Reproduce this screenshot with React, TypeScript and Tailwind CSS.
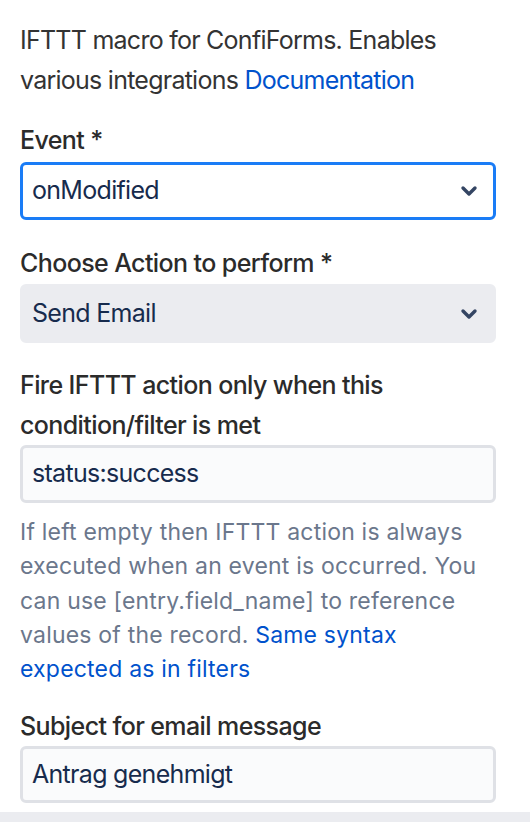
import React from 'react';

const Chevron = () => (
  <svg width="18" height="12" viewBox="0 0 18 12" fill="none" className="shrink-0">
    <path d="M3 3 L9 9 L15 3" stroke="#344563" strokeWidth="3.4" strokeLinecap="round" strokeLinejoin="round" />
  </svg>
);

const Label: React.FC<{ children: React.ReactNode; className?: string }> = ({ children, className }) => (
  <div className={`text-[25px] leading-[40px] font-medium text-[#2b2b2b] tracking-[-0.6px] ${className ?? ''}`}>
    {children}
  </div>
);

const App: React.FC = () => {
  return (
    <div className="w-[530px] h-[822px] bg-white font-['Inter',sans-serif] flex flex-col overflow-hidden">
      <div className="flex-1 pl-5 pt-5">
        {/* Intro */}
        <p className="w-[476px] text-[25px] leading-[40px] text-[#333333] tracking-[-0.75px]">
          IFTTT macro for ConfiForms. Enables various integrations{' '}
          <a className="text-[#0052cc]">Documentation</a>
        </p>

        {/* Event */}
        <Label className="mt-5">Event *</Label>
        <div className="mt-[2px] w-[476px] h-[58px] rounded-[6px] border-[3px] border-[#1a7cf6] bg-white flex items-center justify-between pl-[9px] pr-[15px]">
          <span className="text-[25px] text-[#172b4d] tracking-[-0.7px]">onModified</span>
          <Chevron />
        </div>

        {/* Action */}
        <Label className="mt-[23px]">Choose Action to perform *</Label>
        <div className="mt-[1px] w-[476px] h-[59px] rounded-[6px] border-[3px] border-[#ebecf0] bg-[#ebecf0] flex items-center justify-between pl-[9px] pr-[15px]">
          <span className="text-[25px] text-[#172b4d] tracking-[-0.7px]">Send Email</span>
          <Chevron />
        </div>

        {/* Condition */}
        <Label className="mt-[22px] w-[476px]">Fire IFTTT action only when this condition/filter is met</Label>
        <div className="w-[476px] h-[58px] rounded-[6px] border-[3px] border-[#dfe1e6] bg-[#fafbfc] flex items-center pl-[9px]">
          <span className="text-[25px] text-[#172b4d] tracking-[-0.7px]">status:success</span>
        </div>
        <p className="mt-3 w-[476px] text-[23px] leading-[34.3px] text-[#6b778c] tracking-[0.2px]">
          If left empty then IFTTT action is always executed when an event is occurred. You can use
          [entry.field_name] to reference values of the record.{' '}
          <a className="text-[#0052cc]">Same syntax expected as in filters</a>
        </p>

        {/* Subject */}
        <Label className="mt-5">Subject for email message</Label>
        <div className="w-[476px] h-[57px] rounded-[6px] border-[3px] border-[#dfe1e6] bg-[#fafbfc] flex items-center pl-[9px]">
          <span className="text-[25px] text-[#172b4d] tracking-[-0.7px]">Antrag genehmigt</span>
        </div>
      </div>
      <div className="h-[10px] bg-[#ebecf0] shrink-0" />
    </div>
  );
};

export default App;
